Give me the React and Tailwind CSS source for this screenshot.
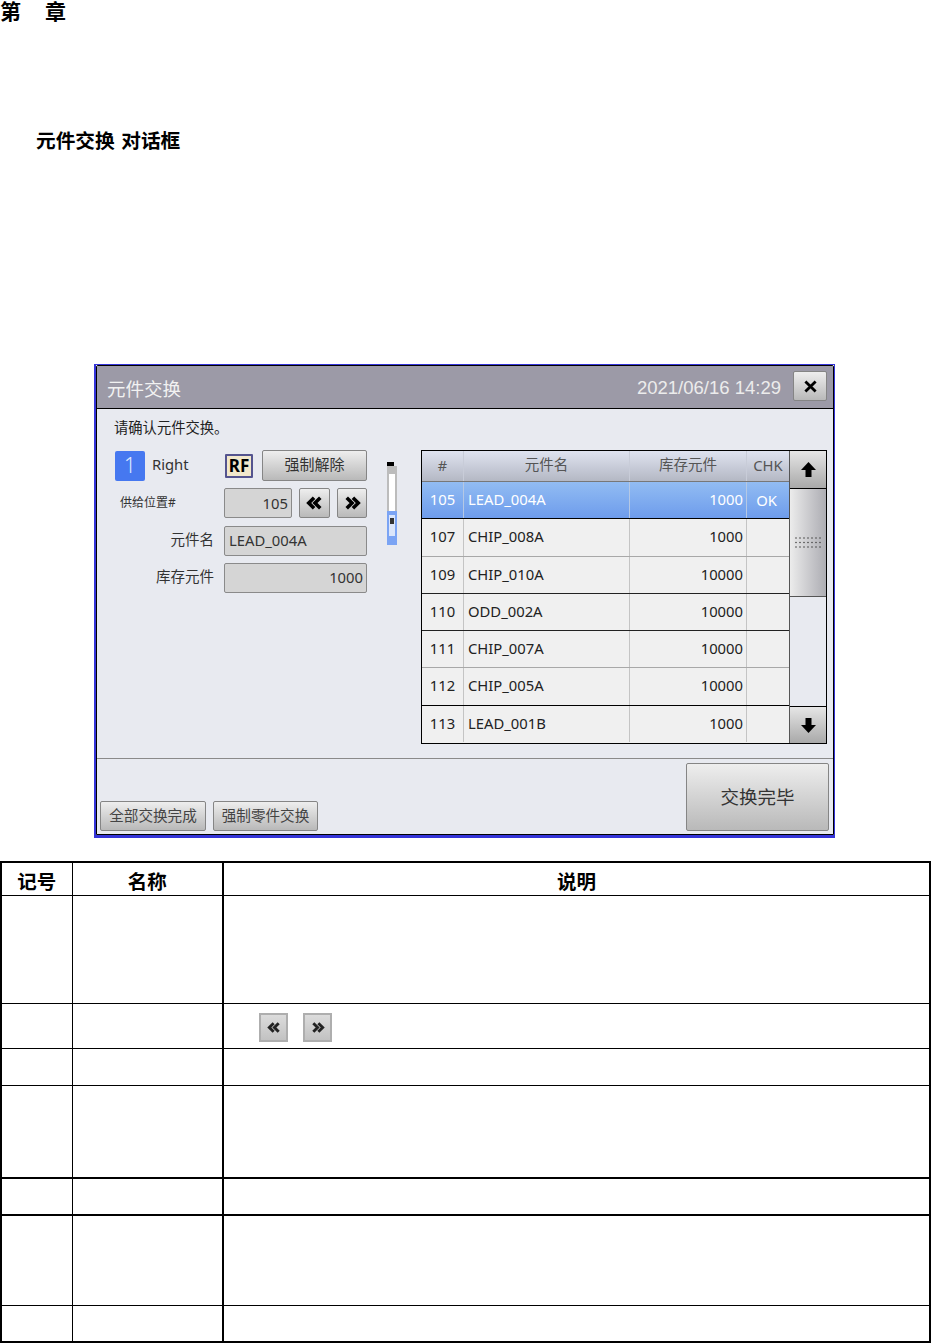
const UI_FONT = "font-['Noto_Sans','Noto_Sans_CJK_SC',sans-serif]";

const rows = [
  { no: "105", name: "LEAD_004A", stock: "1000", chk: "OK", selected: true, line: "border-black" },
  { no: "107", name: "CHIP_008A", stock: "1000", line: "border-[#a8a8a8]" },
  { no: "109", name: "CHIP_010A", stock: "10000", line: "border-[#222]" },
  { no: "110", name: "ODD_002A", stock: "10000", line: "border-[#222]" },
  { no: "111", name: "CHIP_007A", stock: "10000", line: "border-[#a8a8a8]" },
  { no: "112", name: "CHIP_005A", stock: "10000", line: "border-black" },
  { no: "113", name: "LEAD_001B", stock: "1000", line: "border-transparent" },
];

function Chevrons({ dir, className }) {
  const d = dir === "left"
    ? "M10 3 L4 9 L10 15 M17 3 L11 9 L17 15"
    : "M4 3 L10 9 L4 15 M11 3 L17 9 L11 15";
  return (
    <svg viewBox="0 0 21 18" className={className} fill="none" stroke="currentColor" strokeWidth="4">
      <path d={d} />
    </svg>
  );
}

function Arrow({ down }) {
  return (
    <svg viewBox="0 0 15 15" className={`h-[15px] w-[15px] ${down ? "rotate-180" : ""}`} fill="#000">
      <path d="M7.5 0 L15 8 L10.5 8 L10.5 15 L4.5 15 L4.5 8 L0 8 Z" />
    </svg>
  );
}

function GripDots() {
  const dots = [];
  for (let y = 0; y < 3; y++) {
    for (let x = 0; x < 7; x++) {
      dots.push(<circle key={`${x}-${y}`} cx={1 + x * 4} cy={1 + y * 4.5} r="0.8" />);
    }
  }
  return (
    <svg viewBox="0 0 26 12" className="h-[12px] w-[26px]" fill="#444">
      {dots}
    </svg>
  );
}

function GrayButton({ className = "", children }) {
  return (
    <button className={`flex items-center justify-center rounded-[2px] border border-[#858585] bg-gradient-to-b from-[#eeeeee] to-[#b9b9b9] text-[#333] ${className}`}>
      {children}
    </button>
  );
}

function DataRow({ row }) {
  const cell = row.selected ? "border-[#b5c8e4]" : "border-[#c4c4c4]";
  return (
    <div className={`flex flex-1 items-center border-b text-[14.8px] ${row.line} ${row.selected ? "bg-gradient-to-b from-[#92bcf2] to-[#6e9cec] text-white" : "bg-[#f0f0f0] text-[#222]"}`}>
      <div className={`flex h-full w-[42px] items-center justify-center border-r pb-[2px] ${cell}`}>{row.no}</div>
      <div className={`flex h-full w-[166px] items-center border-r pb-[2px] pl-[4px] ${cell}`}>{row.name}</div>
      <div className={`flex h-full w-[117px] items-center justify-end border-r pb-[2px] pr-[3px] ${cell}`}>{row.stock}</div>
      <div className="flex h-full w-[42px] items-center justify-center pr-[3px]">{row.chk}</div>
    </div>
  );
}

function PartsTable() {
  return (
    <div className="flex h-[294px] w-[406px] border border-black">
      <div className="flex w-[367px] flex-col">
        <div className="flex h-[31px] items-center border-b border-[#777] bg-gradient-to-b from-[#dfe3f0] to-[#b4b8c4] text-[14.5px] text-[#555]">
          <div className="flex h-full w-[42px] items-center justify-center border-r border-[#c8ccd8]">#</div>
          <div className="flex h-full w-[166px] items-center justify-center border-r border-[#c8ccd8] pb-[2px]">元件名</div>
          <div className="flex h-full w-[117px] items-center justify-center border-r border-[#c8ccd8] pb-[2px]">库存元件</div>
          <div className="flex h-full w-[42px] items-center justify-center pb-[2px] text-[14.8px]">CHK</div>
        </div>
        {rows.map((row) => (
          <DataRow key={row.no} row={row} />
        ))}
      </div>
      <div className="flex w-[38px] flex-col border-l border-[#555] bg-[#e8eaf0]">
        <div className="flex h-[38px] items-center justify-center border-b border-black bg-gradient-to-b from-[#e6e6e6] to-[#a9a9a9]">
          <Arrow />
        </div>
        <div className="flex h-[108px] items-center justify-center border-b border-[#555] bg-gradient-to-r from-[#ececec] to-[#adadb3]">
          <GripDots />
        </div>
        <div className="flex-1" />
        <div className="flex h-[37px] items-center justify-center border-t border-black bg-gradient-to-b from-[#e6e6e6] to-[#a9a9a9]">
          <Arrow down />
        </div>
      </div>
    </div>
  );
}

function Field({ className = "", children }) {
  return (
    <div className={`flex h-[30px] items-center rounded-[2px] border border-[#8a8a8a] bg-[#d5d5d5] text-[14.8px] text-[#333] ${className}`}>
      {children}
    </div>
  );
}

function LevelGauge() {
  return (
    <div className="ml-[20px] mt-[12px] flex h-[83px] w-[10px] flex-col">
      <div className="h-[4px] w-[7px] bg-black" />
      <div className="h-[45px] bg-[#bcbcbc] px-[2px] pt-[8px]">
        <div className="h-full bg-white" />
      </div>
      <div className="h-[34px] bg-[#7ba4f4] px-[2px] pt-[4px]">
        <div className="flex h-[21px] justify-center bg-[#dbe6fb]">
          <div className="mt-[3px] h-[6px] w-[4px] bg-[#333]" />
        </div>
      </div>
    </div>
  );
}

function LeftPanel() {
  return (
    <div className="w-[252px]">
      <div className="mt-[1px] flex h-[30px] items-center">
        <div className="flex h-[30px] w-[30px] items-center justify-center rounded-[2px] bg-[#4678f0] text-[21px] font-light text-[#dfe8ff]">1</div>
        <span className="ml-[7px] w-[73px] pb-[3px] text-[14.8px] text-[#333]">Right</span>
        <div className="flex h-[24px] w-[28px] items-center justify-center rounded-[1px] border-2 border-[#54548f] bg-[#f2e8cc] text-[17px] font-bold text-black">RF</div>
        <GrayButton className="mb-[1px] ml-[9px] h-[31px] w-[105px] pb-[2px] text-[15px]">强制解除</GrayButton>
      </div>
      <div className="mt-[7px] flex items-center">
        <span className="w-[109px] pl-[5px] text-[12px] text-[#333]">供给位置#</span>
        <Field className="w-[68px] justify-end pr-[3px]">105</Field>
        <GrayButton className="ml-[7px] h-[30px] w-[31px] text-black">
          <Chevrons dir="left" className="h-[16px] w-[19px]" />
        </GrayButton>
        <GrayButton className="ml-[7px] h-[30px] w-[30px] text-black">
          <Chevrons dir="right" className="h-[16px] w-[19px]" />
        </GrayButton>
      </div>
      <div className="mt-[8px] flex items-center">
        <span className="mr-[10px] w-[99px] pb-[2px] text-right text-[14.5px] text-[#333]">元件名</span>
        <Field className="w-[143px] pb-[2px] pl-[4px]">LEAD_004A</Field>
      </div>
      <div className="mt-[7px] flex items-center">
        <span className="mr-[10px] w-[99px] pb-[2px] text-right text-[14.5px] text-[#333]">库存元件</span>
        <Field className="w-[143px] justify-end pb-[2px] pr-[3px]">1000</Field>
      </div>
    </div>
  );
}

function Dialog() {
  return (
    <div className={`ml-[94px] w-[741px] border border-b-[3px] border-l-2 border-[#3434d8] ${UI_FONT}`}>
      <div className="rounded-t-[2px] border border-black bg-[#e8eaf0]">
        <div className="flex h-[43px] items-center justify-between border-b border-black bg-[#9c9aa7] pl-[10px] pr-[6px]">
          <span className="pt-[4px] text-[18.5px] text-[#f2f2f2]">元件交换</span>
          <div className="flex items-center">
            <span className="pt-[1px] font-['Liberation_Sans',sans-serif] text-[18.5px] text-[#ececec]">2021/06/16 14:29</span>
            <GrayButton className="mb-[2px] ml-[12px] h-[30px] w-[34px] text-black">
              <svg viewBox="0 0 14 14" className="h-[13px] w-[13px]" stroke="currentColor" strokeWidth="3">
                <path d="M1.5 1.5 L12.5 12.5 M12.5 1.5 L1.5 12.5" />
              </svg>
            </GrayButton>
          </div>
        </div>
        <div className="h-[41px] pl-[17px] pt-[9px] text-[14.3px] leading-[20px] text-[#222]">请确认元件交换。</div>
        <div className="flex pl-[18px]">
          <LeftPanel />
          <LevelGauge />
          <div className="ml-[24px]">
            <PartsTable />
          </div>
        </div>
        <div className="mt-[14px] flex h-[76px] items-end justify-between border-t border-[#8a8a8a] pb-[3px] pl-[3px] pr-[4px]">
          <div className="flex gap-[7px]">
            <GrayButton className="h-[30px] w-[106px] pb-[1px] text-[14.6px] text-[#444]">全部交换完成</GrayButton>
            <GrayButton className="h-[30px] w-[105px] pb-[1px] text-[14.6px] text-[#444]">强制零件交换</GrayButton>
          </div>
          <GrayButton className="h-[68px] w-[143px] pb-[1px] text-[18.5px] text-[#222]">交换完毕</GrayButton>
        </div>
      </div>
    </div>
  );
}

function MiniButton({ dir }) {
  return (
    <div className="flex h-[29px] w-[29px] items-center justify-center border-2 border-[#aeaeae] bg-gradient-to-b from-[#dcdcdc] to-[#c2c2c2] text-[#222]">
      <Chevrons dir={dir} className="h-[13px] w-[16px]" />
    </div>
  );
}

function DocTable() {
  const cell = "border border-black";
  const head = "border border-black pt-[4px] text-center text-[19.5px] font-bold leading-[24px]";
  return (
    <table className="mt-[23px] w-[931px] table-fixed border-collapse border-2 border-black">
      <colgroup>
        <col className="w-[71px]" />
        <col className="w-[151px]" />
        <col />
      </colgroup>
      <tbody>
        <tr className="h-[33px]">
          <td className={head}>记号</td>
          <td className={`${head} border-r-2`}>名称</td>
          <td className={head}>说明</td>
        </tr>
        <tr className="h-[108px]">
          <td className={cell} />
          <td className={`${cell} border-r-2`} />
          <td className={cell} />
        </tr>
        <tr className="h-[45px]">
          <td className={cell} />
          <td className={`${cell} border-r-2`} />
          <td className={cell}>
            <div className="flex gap-[15px] pl-[35px] pt-[3px]">
              <MiniButton dir="left" />
              <MiniButton dir="right" />
            </div>
          </td>
        </tr>
        <tr className="h-[37px]">
          <td className={cell} />
          <td className={`${cell} border-r-2`} />
          <td className={cell} />
        </tr>
        <tr className="h-[93px]">
          <td className={`${cell} border-b-2`} />
          <td className={`${cell} border-b-2 border-r-2`} />
          <td className={`${cell} border-b-2`} />
        </tr>
        <tr className="h-[37px]">
          <td className={`${cell} border-b-2`} />
          <td className={`${cell} border-b-2 border-r-2`} />
          <td className={`${cell} border-b-2`} />
        </tr>
        <tr className="h-[90px]">
          <td className={cell} />
          <td className={`${cell} border-r-2`} />
          <td className={cell} />
        </tr>
        <tr className="h-[37px]">
          <td className={cell} />
          <td className={`${cell} border-r-2`} />
          <td className={cell} />
        </tr>
      </tbody>
    </table>
  );
}

export default function App() {
  return (
    <div className="h-[1344px] w-[931px] overflow-hidden bg-white font-['Noto_Sans_CJK_SC',sans-serif] text-black">
      <div className="flex h-[20px] items-center gap-[24px] text-[21px] font-bold leading-none">
        <span>第</span>
        <span>章</span>
      </div>
      <h2 className="mt-[107px] h-[237px] pl-[36px] text-[19.7px] font-bold leading-[26px] [word-spacing:2px]">元件交换 对话框</h2>
      <Dialog />
      <DocTable />
    </div>
  );
}
